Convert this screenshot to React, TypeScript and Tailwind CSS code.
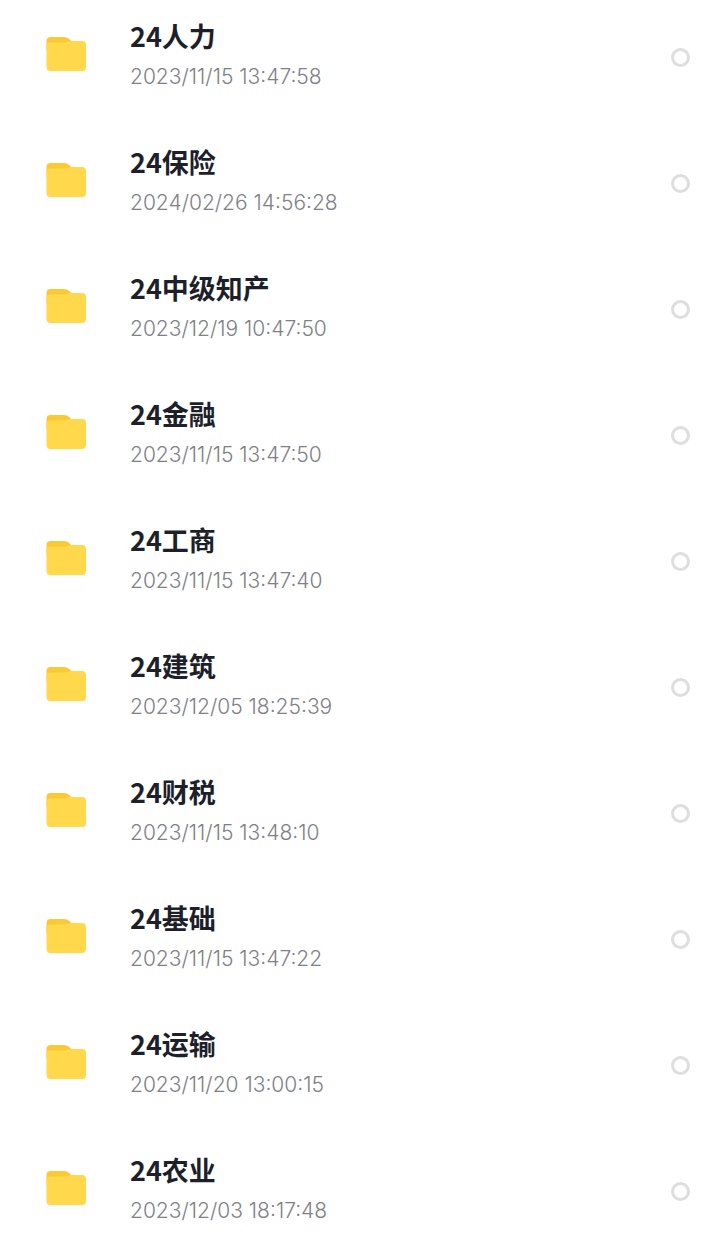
import { useState } from 'react'

type Folder = { name: string; time: string }

const folders: Folder[] = [
  { name: '24人力', time: '2023/11/15 13:47:58' },
  { name: '24保险', time: '2024/02/26 14:56:28' },
  { name: '24中级知产', time: '2023/12/19 10:47:50' },
  { name: '24金融', time: '2023/11/15 13:47:50' },
  { name: '24工商', time: '2023/11/15 13:47:40' },
  { name: '24建筑', time: '2023/12/05 18:25:39' },
  { name: '24财税', time: '2023/11/15 13:48:10' },
  { name: '24基础', time: '2023/11/15 13:47:22' },
  { name: '24运输', time: '2023/11/20 13:00:15' },
  { name: '24农业', time: '2023/12/03 18:17:48' },
]

export default function App() {
  const [selected, setSelected] = useState<string[]>([])

  const toggle = (name: string) => {
    setSelected((prev) =>
      prev.includes(name) ? prev.filter((n) => n !== name) : [...prev, name]
    )
  }

  return (
    <main className="min-h-screen w-full bg-white">
      <ul>
        {folders.map((folder) => (
          <FolderRow
            key={folder.name}
            folder={folder}
            checked={selected.includes(folder.name)}
            onToggle={() => toggle(folder.name)}
          />
        ))}
      </ul>
    </main>
  )
}

function FolderRow({ folder, checked, onToggle }: { folder: Folder; checked: boolean; onToggle: () => void }) {
  return (
    <li>
      <label className="flex items-center pt-[19px] pb-[33px] pl-[46px] pr-[30px]">
        <FolderIcon />
        <span className="ml-11 flex min-w-0 flex-1 flex-col gap-2">
          <span className="font-['Noto_Sans_CJK_SC',sans-serif] text-[27px] leading-[34px] font-bold text-[#1d1f2b]">
            {folder.name}
          </span>
          <span className="font-[Inter,sans-serif] text-[21px] leading-[32px] font-light text-[#808187]">
            {folder.time}
          </span>
        </span>
        <input
          type="checkbox"
          checked={checked}
          onChange={onToggle}
          className="mt-0.5 size-[19px] shrink-0 appearance-none rounded-full border-3 border-[#dedede] bg-white checked:border-[#ffd84a] checked:bg-[#ffd84a]"
        />
      </label>
    </li>
  )
}

function FolderIcon() {
  return (
    <svg className="h-10 w-10 shrink-0" viewBox="0 0 40 40" fill="none" aria-hidden="true">
      {/* back tab */}
      <path d="M.5 5a4 4 0 0 1 4-4H18c2 0 3.500.7 4.800 1.800L26 5.500V15H.5z" fill="#fbc934" />
      {/* front */}
      <path
        d="M.5 10C.5 7.800 2 6.500 4.500 6.500H17c2.500 0 3.800-.5 5.200-1.100 1-.3 2-.4 3.300-.4H36a4 4 0 0 1 4 4v22a4 4 0 0 1-4 4H4.500a4 4 0 0 1-4-4z"
        fill="#ffd84c"
      />
    </svg>
  )
}
